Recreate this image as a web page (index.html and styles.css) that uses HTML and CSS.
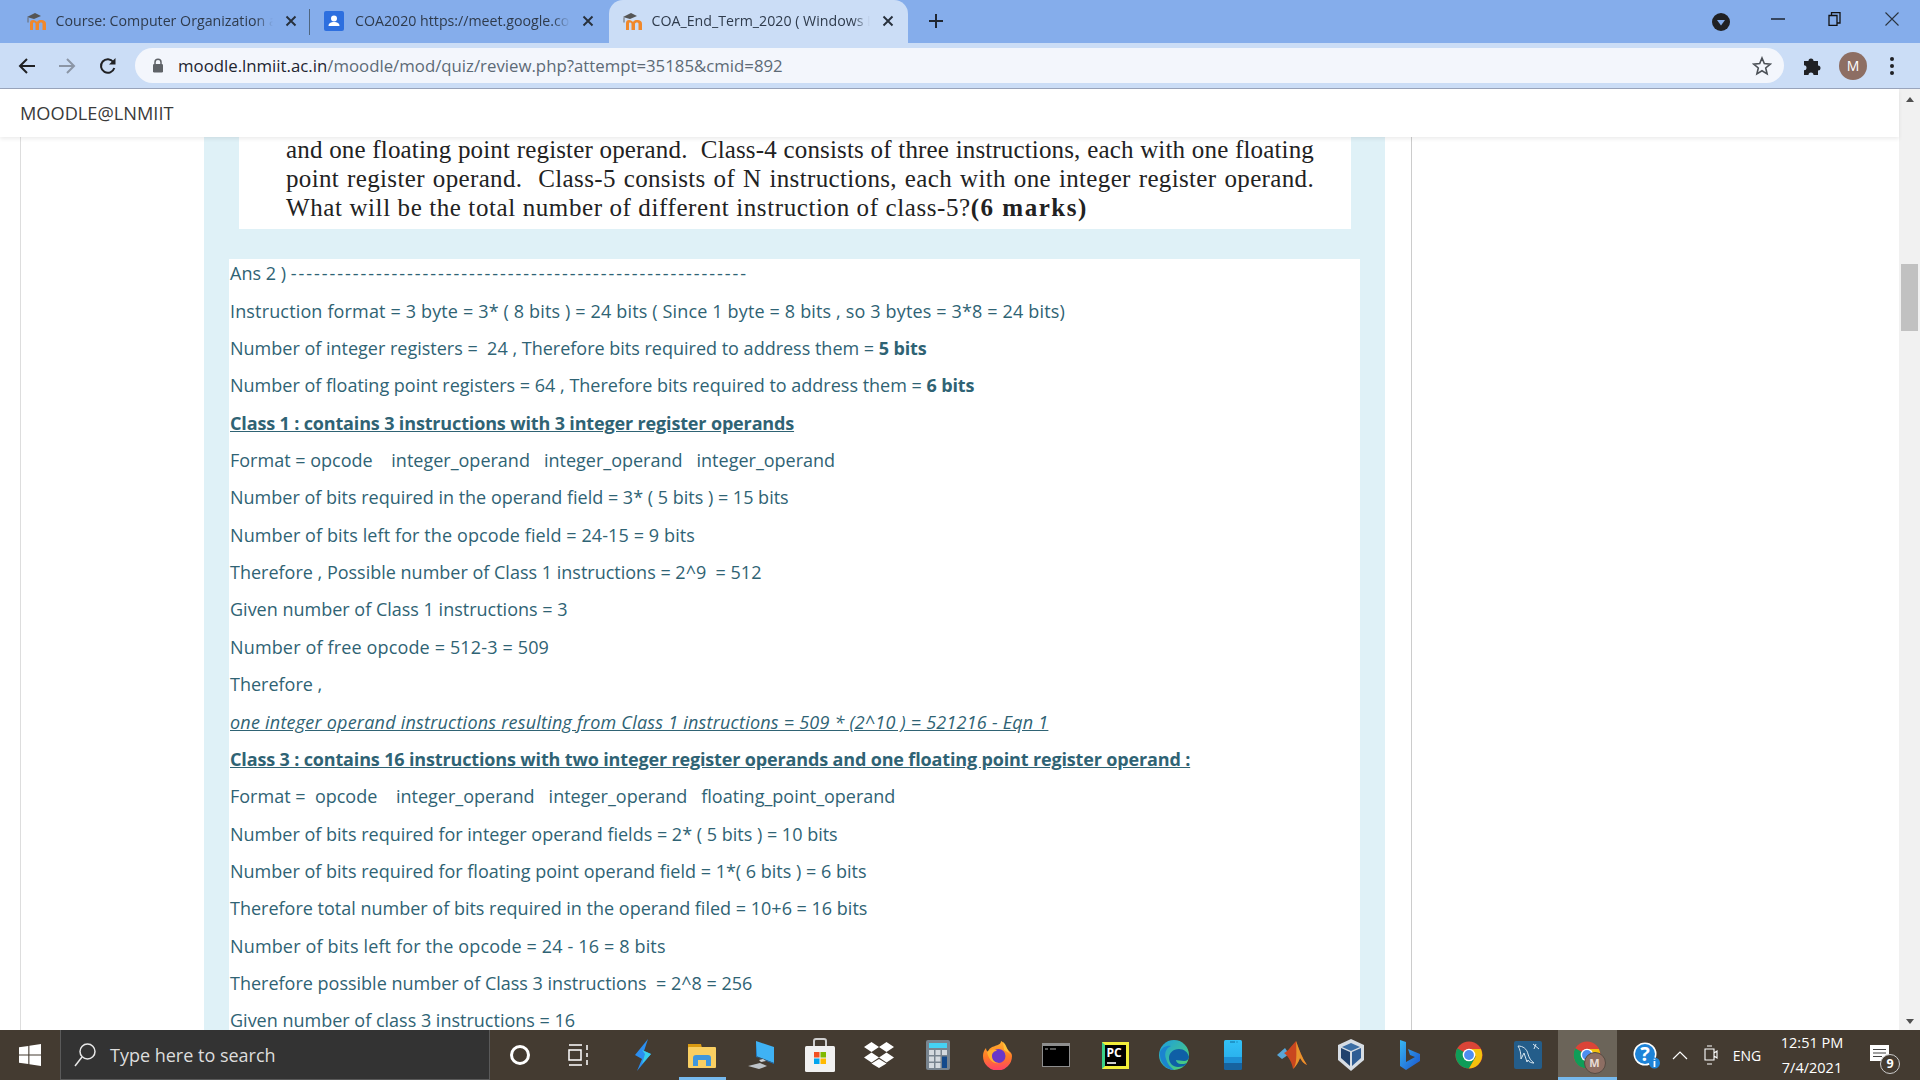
FILE: index.html
```html
<!DOCTYPE html>
<html>
	<head>
		<meta charset="utf-8">
		<title>COA_End_Term_2020</title>
		<link rel="stylesheet" href="styles.css">
	</head>
	<body>
		<svg class="defs" width="0" height="0">
			<defs>
				<symbol id="moodle" viewBox="0 0 24 20">
					<path d="M1 6 9 2l6 3-7 3z" fill="#555"/>
					<path d="M2 6.500v5" stroke="#666" fill="none"/>
					<path d="M4 19v-7c0-2 1-3 3-3s3 1 4 2c1-1.500 2-2 4-2 3 0 5 1 5 4v6h-3.500v-6c0-1-.5-1.500-1.500-1.500s-2 .5-2 1.500v6h-3.500v-6c0-1-.5-1.500-1.500-1.500s-1 .5-1 1.500v6z" fill="#f0882b"/>
				</symbol>
				<symbol id="close" viewBox="0 0 12 12">
					<path d="M1.500 1.500l9 9M10.500 1.500l-9 9" stroke="#27303c" stroke-width="1.900" fill="none"/>
				</symbol>
				<linearGradient id="edgeg" x1="0" y1="0" x2="1" y2="1">
					<stop offset="0" stop-color="#1b9de2"/>
					<stop offset="1" stop-color="#54d46a"/>
				</linearGradient>
				<linearGradient id="foxg" x1="0" y1="0" x2="0" y2="1">
					<stop offset="0" stop-color="#ffb02e"/>
					<stop offset=".55" stop-color="#ff7a26"/>
					<stop offset="1" stop-color="#ff3f6a"/>
				</linearGradient>
				<linearGradient id="phoneg" x1="0" y1="0" x2="0" y2="1">
					<stop offset="0" stop-color="#33c1f7"/>
					<stop offset=".55" stop-color="#2bb3ee"/>
					<stop offset=".56" stop-color="#1d8fd4"/>
					<stop offset=".75" stop-color="#1d8fd4"/>
					<stop offset=".76" stop-color="#17639f"/>
					<stop offset="1" stop-color="#17639f"/>
				</linearGradient>
				<linearGradient id="bingg" x1="0" y1="0" x2="1" y2="1">
					<stop offset="0" stop-color="#38b6f0"/>
					<stop offset="1" stop-color="#1a55cf"/>
				</linearGradient>
				<symbol id="chrome" viewBox="0 0 28 28">
					<circle cx="14" cy="14" r="13.500" fill="#db4437"/>
					<path d="M14 14 2.300 7.300A13.500 13.500 0 0 0 14 27.500l6.800-11.700z" fill="#0f9d58"/>
					<path d="M14 8h11.800A13.500 13.500 0 0 1 14 27.500L20.800 15.800z" fill="#f4c20d"/>
					<circle cx="14" cy="14" r="6.300" fill="#fff"/>
					<circle cx="14" cy="14" r="4.900" fill="#4d8ef0"/>
				</symbol>
			</defs>
		</svg>

		<div class="tabstrip">
			<div class="tab">
				<svg class="favicon"><use href="#moodle"/></svg>
				<span class="tabtitle">Course: Computer Organization a</span>
				<svg class="tabclose"><use href="#close"/></svg>
			</div>
			<div class="tabsep"></div>
			<div class="tab">
				<svg class="favicon" viewBox="0 0 22 22">
					<rect x="1" y="1" width="20" height="20" rx="2" fill="#2d6fdf"/>
					<circle cx="11" cy="8.500" r="3" fill="#fff"/>
					<path d="M5.500 16c0-3 2.500-4 5.500-4s5.500 1 5.500 4z" fill="#fff"/>
				</svg>
				<span class="tabtitle">COA2020 https://meet.google.co</span>
				<svg class="tabclose"><use href="#close"/></svg>
			</div>
			<div class="tab active">
				<svg class="favicon"><use href="#moodle"/></svg>
				<span class="tabtitle">COA_End_Term_2020 ( Windows L</span>
				<svg class="tabclose"><use href="#close"/></svg>
			</div>
			<svg class="newtab" viewBox="0 0 14 14"><path d="M7 0v14M0 7h14" stroke="#1f2733" stroke-width="2" fill="none"/></svg>
			<div class="stripright">
				<svg class="tabsearch" viewBox="0 0 18 18">
					<circle cx="9" cy="9" r="9" fill="#202124"/>
					<path d="M5 7h8l-4 5.500z" fill="#85adeb"/>
				</svg>
				<div class="winbtn"><svg width="14" height="2"><path d="M0 1h14" stroke="#1c2430" stroke-width="1.500"/></svg></div>
				<div class="winbtn"><svg width="14" height="14" viewBox="0 0 14 14"><path d="M1 3.500h8v10h-8zM3.500 3.500V.7h8.500v10.300H9" stroke="#111" stroke-width="1.300" fill="none"/></svg></div>
				<div class="winbtn"><svg width="16" height="16" viewBox="0 0 16 16"><path d="M1.500 1.500l13 13M14.500 1.500l-13 13" stroke="#2b3440" stroke-width="1.100" fill="none"/></svg></div>
			</div>
		</div>

		<div class="toolbar">
			<svg class="navicon" viewBox="0 0 18 18"><path d="M17 9H2.500M9 2 2 9l7 7" stroke="#202124" stroke-width="2" fill="none"/></svg>
			<svg class="navicon" viewBox="0 0 18 18"><path d="M1 9h14.500M9 2l7 7-7 7" stroke="#8b95a5" stroke-width="2" fill="none"/></svg>
			<svg class="navicon reload" viewBox="0 0 18 18"><path d="M15.300 11a6.800 6.800 0 1 1-1-6" stroke="#202124" stroke-width="2" fill="none"/><path d="M16.500 1v6.500H10z" fill="#202124"/></svg>
			<div class="omnibox">
				<svg class="lock" viewBox="0 0 12 15"><path d="M3 6.500V4.200a3 3 0 0 1 6 0v2.300" stroke="#5f6368" stroke-width="1.500" fill="none"/><rect x="1" y="6" width="10" height="8.500" rx="1.200" fill="#5f6368"/></svg>
				<span class="url"><b>moodle.lnmiit.ac.in</b>/moodle/mod/quiz/review.php?attempt=35185&amp;cmid=892</span>
				<svg class="star" viewBox="0 0 20 20"><path d="m10 2 2.300 5.600 6 .5-4.600 3.900 1.400 5.900L10 14.800 4.900 17.900l1.400-5.900L1.700 8.100l6-.5z" stroke="#4c5157" stroke-width="1.600" fill="none"/></svg>
			</div>
			<svg class="puzzle" viewBox="0 0 20 20"><path d="M2 5h4.500a2.500 2.500 0 1 1 5 0H16v4.500a2.500 2.500 0 1 1 0 5V19H11.500a2.500 2.500 0 1 0-5 0H2v-4.800a2.500 2.500 0 1 0 0-5z" fill="#202124"/></svg>
			<div class="avatar">M</div>
			<div class="kebab"><i></i><i></i><i></i></div>
		</div>

		<div class="view">
			<div class="main">
				<header class="sitebar">MOODLE@LNMIIT</header>
				<div class="region">
					<div class="column">
						<div class="panel">
							<div class="question">
								<p class="qline">and one floating point register operand.&nbsp; Class-4 consists of three instructions, each with one floating</p>
								<p class="qline">point register operand.&nbsp; Class-5 consists of N instructions, each with one integer register operand.</p>
								<p class="qlast">What will be the total number of different instruction of class-5?<b>(6 marks)</b></p>
							</div>
							<div class="answer">
								<p>Ans 2 ) <span class="dashes">-----------------------------------------------------------</span></p>
								<p class="w2">Instruction format = 3 byte = 3* ( 8 bits ) = 24 bits ( Since 1 byte = 8 bits , so 3 bytes = 3*8 = 24 bits)</p>
								<p>Number of integer registers = &nbsp;24 , Therefore bits required to address them = <b>5 bits</b></p>
								<p>Number of floating point registers = 64 , Therefore bits required to address them = <b>6 bits</b></p>
								<p><b><u>Class 1 : contains 3 instructions with 3 integer register operands</u></b></p>
								<p>Format = opcode &nbsp; &nbsp;integer_operand &nbsp; integer_operand &nbsp; integer_operand</p>
								<p>Number of bits required in the operand field = 3* ( 5 bits ) = 15 bits</p>
								<p class="w1">Number of bits left for the opcode field = 24-15 = 9 bits</p>
								<p>Therefore , Possible number of Class 1 instructions = 2^9 &nbsp;= 512</p>
								<p>Given number of Class 1 instructions = 3</p>
								<p class="w2">Number of free opcode = 512-3 = 509</p>
								<p>Therefore ,</p>
								<p><i><u>one integer operand instructions resulting from Class 1 instructions = 509 * (2^10 ) = 521216 - Eqn 1</u></i></p>
								<p><b><u>Class 3 : contains 16 instructions with two integer register operands and one floating point register operand :</u></b></p>
								<p>Format = &nbsp;opcode &nbsp; &nbsp;integer_operand &nbsp; integer_operand &nbsp; floating_point_operand</p>
								<p>Number of bits required for integer operand fields = 2* ( 5 bits ) = 10 bits</p>
								<p>Number of bits required for floating point operand field = 1*( 6 bits ) = 6 bits</p>
								<p>Therefore total number of bits required in the operand filed = 10+6 = 16 bits</p>
								<p class="w2">Number of bits left for the opcode = 24 - 16 = 8 bits</p>
								<p>Therefore possible number of Class 3 instructions &nbsp;= 2^8 = 256</p>
								<p>Given number of class 3 instructions = 16</p>
							</div>
						</div>
					</div>
				</div>
			</div>
			<div class="scrollbar">
				<div class="arrow up"></div>
				<div class="track"><div class="thumb"></div></div>
				<div class="arrow down"></div>
			</div>
		</div>

		<div class="taskbar">
			<div class="startbtn">
				<svg width="22" height="22" viewBox="0 0 22 22"><path d="M0 3.200 9.300 1.900v8.500H0zM10.400 1.700 22 0v10.400H10.400zM0 11.600h9.300v8.500L0 18.800zM10.400 11.600H22V22l-11.600-1.700z" fill="#fff"/></svg>
			</div>
			<div class="searchbox">
				<svg width="24" height="26" viewBox="0 0 24 26"><circle cx="14.500" cy="9.500" r="7.500" stroke="#e8e8e8" stroke-width="1.500" fill="none"/><path d="M9 15 2 24" stroke="#e8e8e8" stroke-width="1.500"/></svg>
				<span>Type here to search</span>
			</div>
			<div class="cortana"><svg width="22" height="22" viewBox="0 0 22 22"><circle cx="11" cy="11" r="8.500" stroke="#fff" stroke-width="3" fill="none"/></svg></div>
			<div class="taskview"><svg width="22" height="22" viewBox="0 0 22 22"><path d="M1 1h13M1 21h13M19 1v5M19 9v4M19 16v5M1 6h12v10H1z" stroke="#fff" stroke-width="1.500" fill="none"/></svg></div>

			<div class="appicon">
				<svg width="18" height="32" viewBox="0 0 18 32"><path d="M14 0 1 16l7 4-5 12 14-17-7-3z" fill="#2b8ef0"/><path d="M8 11l9 4-9 10 3-10z" fill="#38d0e8"/></svg>
			</div>
			<div class="appicon running">
				<svg width="28" height="26" viewBox="0 0 28 26"><path d="M0 2h13l1 4H0z" fill="#d99a12"/><rect y="5" width="28" height="21" rx="1" fill="#f9cf62"/><path d="M5 24v-8a3 3 0 0 1 3-3h12a3 3 0 0 1 3 3v8h-5v-6h-8v6z" fill="#3f97dd"/></svg>
			</div>
			<div class="appicon">
				<svg width="28" height="28" viewBox="0 0 28 28"><path d="M9 0l18 6v16L9 15z" fill="#3fb2f4"/><path d="M9 0v1l1 15 17 6v1L9 16z" fill="#1c6fb8"/><path d="M1 25l12-3 7 3-8 3z" fill="#bfc4c9"/><path d="M12 19l4-1 3 2-5 1z" fill="#ccd0d4"/></svg>
			</div>
			<div class="appicon">
				<svg width="30" height="34" viewBox="0 0 30 34">
					<path d="M9 9V3a2 2 0 0 1 2-2h8a2 2 0 0 1 2 2v6" stroke="#cfcfcf" stroke-width="2" fill="none"/>
					<rect y="8" width="30" height="26" rx="1.500" fill="#f1f1f1"/>
					<rect x="9" y="14" width="5.500" height="5.500" fill="#f25022"/><rect x="15.500" y="14" width="5.500" height="5.500" fill="#7fba00"/>
					<rect x="9" y="20.500" width="5.500" height="5.500" fill="#00a4ef"/><rect x="15.500" y="20.500" width="5.500" height="5.500" fill="#ffb900"/>
				</svg>
			</div>
			<div class="appicon">
				<svg width="30" height="26" viewBox="0 0 30 26" fill="#fff"><path d="M7.500 0 15 5 7.500 10 0 5zM22.500 0 30 5l-7.500 5L15 5zM7.500 10.500 15 15.500l-7.500 5-7.500-5zM22.500 10.500l7.500 5-7.500 5-7.500-5zM15 17l7.500 4.500L15 26l-7.500-4.500z"/></svg>
			</div>
			<div class="appicon">
				<svg width="24" height="30" viewBox="0 0 24 30"><rect width="24" height="30" rx="2" fill="#78848f"/><rect x="3" y="3" width="18" height="5" fill="#45d2f4"/><g fill="#d4dadf"><rect x="3" y="10" width="5" height="5"/><rect x="9.500" y="10" width="5" height="5"/><rect x="16" y="10" width="5" height="5"/><rect x="3" y="16.500" width="5" height="5"/><rect x="9.500" y="16.500" width="5" height="5"/><rect x="3" y="23" width="5" height="5"/><rect x="9.500" y="23" width="5" height="5"/></g><rect x="16" y="16.500" width="5" height="11.500" fill="#134a8c"/></svg>
			</div>
			<div class="appicon">
				<svg width="29" height="29" viewBox="0 0 29 29"><path d="M18 0c5 3 4 6 6 8 3 3 5 4 5 7a14.500 14.500 0 1 1-29 0c0-3 1-6 3-8 0 2 1 3 2 4 1-4 4-5 7-6 3-1 6-2 6-5z" fill="url(#foxg)"/><path d="M20 1c4 3 3 7 9 14-2-3-6-5-8-6z" fill="#ffc23a"/><circle cx="15.500" cy="15" r="7" fill="#6a37c8"/><path d="M4 11c3-3 8-3 10-1-3 0-5 2-5 5 0 4 3 7 7 7-5 1-10-2-12-11z" fill="#ffb02e"/></svg>
			</div>
			<div class="appicon">
				<svg width="28" height="24" viewBox="0 0 28 24"><rect width="28" height="24" fill="#8e8e8e"/><rect x="1" y="3" width="26" height="20" fill="#000"/><path d="M3 6h3M8 6h6" stroke="#aaa"/></svg>
			</div>
			<div class="appicon">
				<div class="pycharm"><span>PC</span><i></i></div>
			</div>
			<div class="appicon">
				<svg width="30" height="30" viewBox="0 0 30 30"><circle cx="15" cy="15" r="15" fill="url(#edgeg)"/><path d="M30 17c-1-5-5-8-10-8-6 0-10 4-10 9 0 5 4 9 9 9 4 0 7-1 9-4-2 1-4 1-6 1-3 0-5-2-5-4 2 0 5 1 8 1 3 0 5-2 5-4z" fill="#0f5fa6"/><path d="M1 12c2-5 7-7 11-6-5 2-7 7-5 13 1 4 4 8 8 11C7 30 0 22 1 12z" fill="#1b84cf"/></svg>
			</div>
			<div class="appicon">
				<svg width="18" height="30" viewBox="0 0 18 30"><rect width="18" height="30" rx="1.500" fill="url(#phoneg)"/><path d="M6 2h5M12.500 2h1" stroke="#0f6d9e"/></svg>
			</div>
			<div class="appicon">
				<svg width="30" height="28" viewBox="0 0 30 28"><path d="M0 14l8-7 4 6-4 3-3 2z" fill="#58a6d8"/><path d="M7 12c3-1 5-4 12-12 3 8 6 17 11 24-4-2-5-4-7-7-2 5-4 8-7 11-1-6-4-12-9-16z" fill="#c9461f"/><path d="M16 28c3-4 4-8 3-28 3 8 6 17 11 24-4-2-5-4-7-7-2 5-4 8-7 11z" fill="#e8942c"/></svg>
			</div>
			<div class="appicon">
				<svg width="26" height="32" viewBox="0 0 26 32"><path d="M13 0 26 6v15l-13 11L0 21V6z" fill="#d7dde4"/><path d="M13 4l9 4-9 4-9-4z" fill="#3b6ea5"/><path d="M3 9l9 4v14l-9-8z" fill="#20426e"/><path d="M23 9l-9 4v14l9-8z" fill="#2f5d94"/></svg>
			</div>
			<div class="appicon">
				<svg width="20" height="30" viewBox="0 0 20 30"><path d="M0 0l6 2v20l9-5-5-2-2-6 12 5v7L6 30 0 26z" fill="url(#bingg)"/></svg>
			</div>
			<div class="appicon">
				<svg width="28" height="28"><use href="#chrome"/></svg>
			</div>
			<div class="appicon">
				<svg width="28" height="28" viewBox="0 0 28 28"><rect width="28" height="28" rx="2" fill="#245d8a"/><path d="M4 5c5 0 9 3 10 8 1 4 3 7 6 9-3 0-5-1-6-3l-1 2-3-9-3 6c0-6-1-10-3-13zM19 3l6 5M22 3l-2 5" stroke="#d7e5ef" stroke-width="1" fill="none"/></svg>
			</div>
			<div class="appicon current">
				<svg width="28" height="28"><use href="#chrome"/></svg>
				<span class="chromebadge">M</span>
			</div>

			<div class="tray help">
				<svg width="28" height="28" viewBox="0 0 28 28"><circle cx="13" cy="13" r="11.500" fill="#fff"/><circle cx="13" cy="13" r="10" fill="#1d83d8"/><text x="13" y="20" class="helpmark">?</text><circle cx="22.500" cy="22" r="5.500" fill="#1d83d8"/><path d="M22.500 20v6M22.500 17.800v1" stroke="#fff" stroke-width="1.800"/></svg>
			</div>
			<div class="tray chevron"><svg width="16" height="10" viewBox="0 0 16 10"><path d="M1 9l7-7 7 7" stroke="#fff" stroke-width="1.200" fill="none"/></svg></div>
			<div class="tray meet"><svg width="14" height="22" viewBox="0 0 14 22"><path d="M1 5h9v11H1zM10 9l3-2v7l-3-2M3 2h5M3 20h5" stroke="#fff" stroke-width="1.100" fill="none"/></svg></div>
			<div class="tray lang">ENG</div>
			<div class="tray clock"><span>12:51 PM</span><span>7/4/2021</span></div>
			<div class="tray notif">
				<svg width="20" height="20" viewBox="0 0 20 20"><path d="M0 0h19v16H0z" fill="#fff"/><path d="M3 4.500h13M3 8h13M3 11.500h9" stroke="#444" stroke-width="1.200"/></svg>
				<span class="notifcount">9</span>
			</div>
		</div>
	</body>
</html>
```

FILE: styles.css
```css
html, body {margin:0;padding:0;height:100%;}
body {
	font-family:"Open Sans", sans-serif;
	display:flex;
	flex-direction:column;
	height:1080px;
	overflow:hidden;
	background:#fff;
}
p {margin:0;}
.defs {position:absolute;}

/* tab strip */
.tabstrip {
	display:flex;
	align-items:center;
	height:43px;
	flex:none;
	background:#85adeb;
	padding-left:16px;
}
.tab {
	display:flex;
	align-items:center;
	width:280px;
	height:43px;
	box-sizing:border-box;
	color:#2f3b4c;
	font-size:14.200px;
	padding-bottom:2px;
	flex:none;
}
.tab.active {
	width:299px;
	margin-left:3px;
	padding-left:13px;
	padding-right:14px;
	background:#cbddf6;
	border-radius:14px 14px 0 0;
}
.tabsep {
	width:1px;
	height:26px;
	background:#4f6680;
	flex:none;
	margin-right:-1px;
	margin-left:-2px;
}
.tab:first-child {padding-right:14px;padding-left:10px;width:295px;}
.tabsep + .tab {padding-left:13px;width:297px;padding-right:12px;}
.favicon {width:24px;height:22px;flex:none;margin-right:5.500px;}
.tabsep + .tab .favicon {margin-right:9px;}
.tabtitle {
	flex:1;
	white-space:nowrap;
	overflow:hidden;
	-webkit-mask-image:linear-gradient(90deg, #000 92%, transparent);
	mask-image:linear-gradient(90deg, #000 92%, transparent);
}
.tabclose {width:12px;height:12px;flex:none;margin-left:12px;}
.newtab {width:14px;height:14px;margin-left:21px;margin-bottom:2px;flex:none;}
.stripright {
	margin-left:auto;
	display:flex;
	align-items:center;
}
.tabsearch {width:18px;height:18px;margin-right:19px;margin-top:1px;}
.winbtn {
	width:57px;
	height:43px;
	display:flex;
	align-items:center;
	justify-content:center;
	margin-top:-6px;
}

/* toolbar */
.toolbar {
	display:flex;
	align-items:center;
	height:45px;
	flex:none;
	background:#cbddf6;
	border-bottom:1px solid #9aa5bc;
	padding-left:18px;
	box-sizing:content-box;
}
.navicon {width:18px;height:18px;margin-right:22px;flex:none;}
.navicon.reload {margin-left:1px;margin-right:21px;}
.omnibox {
	display:flex;
	align-items:center;
	width:1649px;
	height:35px;
	margin-left:-3px;
	border-radius:18px;
	background:#f3f6fc;
	padding-left:17px;
	box-sizing:border-box;
	flex:none;
}
.lock {width:12px;height:15px;margin-right:14px;flex:none;}
.url {color:#5d6a76;font-size:16.800px;white-space:nowrap;}
.url b {color:#1d2430;font-weight:400;}
.star {width:20px;height:20px;margin-left:auto;margin-right:12px;}
.puzzle {width:20px;height:20px;margin-left:18px;flex:none;}
.avatar {
	width:28px;
	height:28px;
	border-radius:50%;
	margin-left:17px;
	background:#8d6e63;
	color:#fff;
	font-size:14px;
	line-height:28px;
	text-align:center;
	flex:none;
}
.kebab {
	display:flex;
	flex-direction:column;
	gap:3px;
	margin-left:23px;
}
.kebab i {width:4px;height:4px;border-radius:50%;background:#202124;display:block;}

/* page */
.view {flex:1;display:flex;min-height:0;}
.main {flex:1;display:flex;flex-direction:column;min-width:0;}
.sitebar {
	height:48px;
	flex:none;
	box-sizing:border-box;
	padding-left:20px;
	line-height:48px;
	font-size:18.200px;
	color:#3a3a3a;
	background:#fff;
	box-shadow:0 2px 4px rgba(0,0,0,.08);
	position:relative;
}
.region {flex:1;min-height:0;overflow:hidden;padding-left:20px;}
.column {
	width:1392px;
	height:100%;
	box-sizing:border-box;
	border-left:1px solid #ddd;
	border-right:1px solid #ccc;
	padding-left:183px;
}
.panel {
	width:1181px;
	height:100%;
	background:#dff1f7;
	padding-left:25px;
	box-sizing:border-box;
}
.question {
	display:flow-root;
	width:1112px;
	margin-left:10px;
	height:92px;
	background:#fff;
	padding:0 37px 0 47px;
	box-sizing:border-box;
	font-family:"Liberation Serif", serif;
	font-size:25px;
	line-height:29px;
	color:#222;
}
.qline {text-align:justify;text-align-last:justify;white-space:nowrap;letter-spacing:.35px;}
.qline:first-child {margin-top:-2px;letter-spacing:.15px;}
.qlast {white-space:nowrap;letter-spacing:.6px;}
.qlast b {letter-spacing:1.500px;}
.answer {
	margin-top:30px;
	width:1131px;
	height:800px;
	background:#fff;
	padding:2.400px 0 0 1px;
	box-sizing:border-box;
	color:#2f6374;
	font-size:18px;
}
.answer p {
	line-height:24px;
	margin-bottom:13.350px;
	white-space:nowrap;
}
.answer b {font-weight:700;letter-spacing:-.15px;}
.answer i {letter-spacing:.22px;}
.answer .w1 {letter-spacing:.1px;}
.answer .w2 {letter-spacing:.15px;}
.dashes {letter-spacing:1.960px;}

/* scrollbar */
.scrollbar {
	width:21px;
	flex:none;
	background:#f1f1f1;
	display:flex;
	flex-direction:column;
	align-items:center;
}
.arrow {width:0;height:0;flex:none;border-left:4.500px solid transparent;border-right:4.500px solid transparent;}
.arrow.up {border-bottom:5px solid #505050;margin-top:8px;}
.arrow.down {border-top:5px solid #505050;margin-bottom:6px;}
.track {flex:1;width:100%;padding-top:162px;box-sizing:border-box;}
.thumb {width:17px;height:67px;background:#c1c1c1;margin-left:2px;}

/* taskbar */
.taskbar {
	height:50px;
	flex:none;
	display:flex;
	background:#443b31;
	color:#fff;
}
.startbtn {width:60px;display:flex;align-items:center;justify-content:center;flex:none;}
.searchbox {
	width:430px;
	display:flex;
	align-items:center;
	gap:13px;
	padding-left:12px;
	box-sizing:border-box;
	background:#333;
	border:1px solid #5a5a5a;
	border-width:0 1px 1px 1px;
	color:#ddd;
	font-size:18px;
	flex:none;
}
.cortana, .taskview, .appicon, .tray {
	display:flex;
	align-items:center;
	justify-content:center;
	flex:none;
	position:relative;
}
.cortana {width:59px;}
.taskview {width:64.500px;padding-right:5px;box-sizing:border-box;}
.appicon {width:59px;}
.appicon.running::after {
	content:"";
	position:absolute;
	left:6px;
	right:6px;
	bottom:0;
	height:3px;
	background:#76b9ed;
}
.appicon.current {background:#6b6459;}
.appicon.current::after {
	content:"";
	position:absolute;
	left:0;
	right:0;
	bottom:0;
	height:3px;
	background:#76b9ed;
}
.chromebadge {
	position:absolute;
	left:26px;
	top:22px;
	width:20px;
	height:20px;
	border-radius:50%;
	background:#8d6e63;
	border:1px solid #554b42;
	font-size:11px;
	font-weight:700;
	line-height:20px;
	text-align:center;
	color:#e8dcd6;
}
.pycharm {
	width:27px;
	height:27px;
	box-sizing:border-box;
	background:#000;
	border:3px solid #f2ee3a;
	border-left-color:#3bd28a;
	position:relative;
	color:#fff;
	font-size:12px;
	font-weight:700;
	line-height:15px;
	padding-left:2px;
}
.pycharm span {display:block;}
.pycharm i {display:block;width:9px;height:2px;background:#ccc;margin-top:2px;}
.helpmark {
	font-family:"Open Sans", sans-serif;
	font-size:20px;
	font-weight:700;
	fill:#fff;
	text-anchor:middle;
}
.tray.help {width:44px;margin-left:7.500px;}
.tray.chevron {width:24px;}
.tray.meet {width:38px;}
.tray.lang {width:34px;font-size:14px;}
.tray.clock {
	width:96px;
	flex-direction:column;
	justify-content:center;
	gap:5px;
	font-size:14.500px;
	line-height:20px;
}
.tray.clock span {display:block;}
.tray.notif {width:40px;}
.notifcount {
	position:absolute;
	left:20px;
	top:24px;
	width:18px;
	height:18px;
	border-radius:50%;
	background:#443b31;
	border:1px solid #ccc;
	font-size:12.500px;
	font-weight:700;
	line-height:18px;
	text-align:center;
}
```
